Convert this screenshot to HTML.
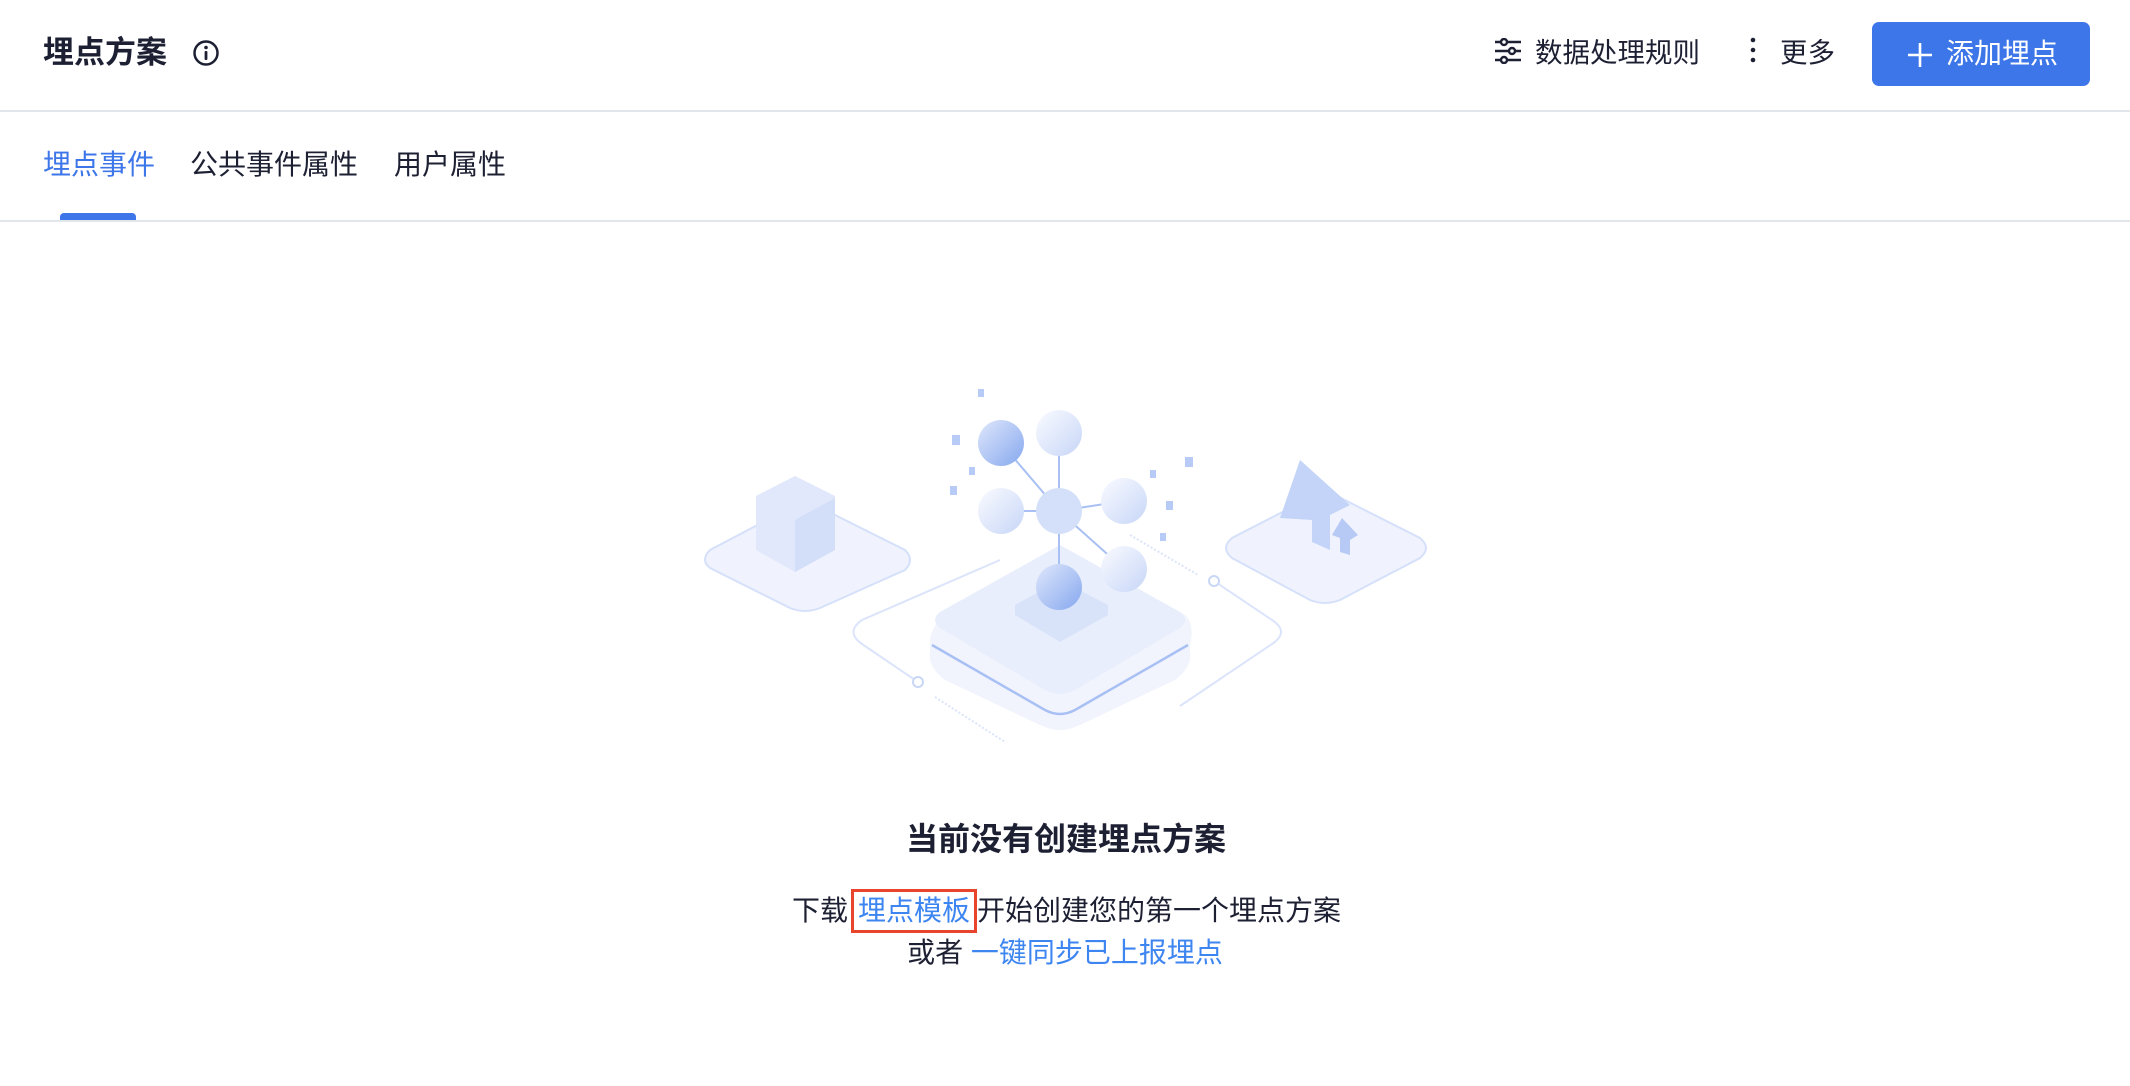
<!DOCTYPE html>
<html><head><meta charset="utf-8">
<style>
*{margin:0;padding:0;box-sizing:border-box}
html,body{width:2130px;height:1086px;background:#fff;overflow:hidden;font-family:"Liberation Sans","Noto Sans CJK SC",sans-serif;color:#1d2033}
.abs{position:absolute;white-space:nowrap}
.hline{position:absolute;left:0;width:2130px;height:2px;background:#e2e5ea}
</style></head><body>
<div class="abs" style="left:43px;top:33px;font-size:31px;font-weight:bold;line-height:40px">埋点方案</div>
<svg class="abs" style="left:192px;top:39px" width="28" height="28" viewBox="0 0 28 28"><circle cx="14" cy="14" r="11.5" fill="none" stroke="#1d2033" stroke-width="2.5"/><circle cx="14" cy="8.5" r="1.8" fill="#1d2033"/><rect x="12.6" y="12" width="2.8" height="9" rx="1" fill="#1d2033"/></svg>

<svg class="abs" style="left:1494px;top:38px" width="28" height="26" viewBox="0 0 28 26"><g stroke="#1d2033" stroke-width="2.4" fill="#fff"><line x1="1" y1="4" x2="27" y2="4"/><line x1="1" y1="13" x2="27" y2="13"/><line x1="1" y1="22" x2="27" y2="22"/><circle cx="10" cy="4" r="3"/><circle cx="18" cy="13" r="3"/><circle cx="10" cy="22" r="3"/></g></svg>
<div class="abs" style="left:1535px;top:34px;font-size:27.5px;line-height:38px">数据处理规则</div>
<svg class="abs" style="left:1748px;top:36px" width="10" height="30"><circle cx="5" cy="4" r="2.3" fill="#1d2033"/><circle cx="5" cy="14" r="2.3" fill="#1d2033"/><circle cx="5" cy="24" r="2.3" fill="#1d2033"/></svg>
<div class="abs" style="left:1780px;top:34px;font-size:27.5px;line-height:38px">更多</div>
<div class="abs" style="left:1872px;top:22px;width:218px;height:64px;background:#3d76e8;border-radius:7px"></div>
<svg class="abs" style="left:1907px;top:42px" width="26" height="26"><line x1="13" y1="1" x2="13" y2="25" stroke="#fff" stroke-width="2.6"/><line x1="1" y1="13" x2="25" y2="13" stroke="#fff" stroke-width="2.6"/></svg>
<div class="abs" style="left:1946px;top:35px;font-size:28px;line-height:38px;color:#fff">添加埋点</div>

<div class="hline" style="top:110px"></div>
<div class="abs" style="left:43px;top:146px;font-size:28px;line-height:38px;color:#3d76e8">埋点事件</div>
<div class="abs" style="left:190px;top:146px;font-size:28px;line-height:38px">公共事件属性</div>
<div class="abs" style="left:394px;top:146px;font-size:28px;line-height:38px">用户属性</div>
<div class="abs" style="left:60px;top:213px;width:76px;height:8px;background:#3d76e8;border-radius:4px 4px 0 0"></div>
<div class="hline" style="top:220px"></div>

<svg class="abs" style="left:0;top:0" width="2130" height="1086" viewBox="0 0 2130 1086">
<defs>
<linearGradient id="g1" x1="0" y1="0" x2="1" y2="1"><stop offset="0" stop-color="#dfe7fb"/><stop offset="1" stop-color="#86a8ef"/></linearGradient>
<linearGradient id="g2" x1="0" y1="0" x2="1" y2="1"><stop offset="0" stop-color="#fafbff"/><stop offset="1" stop-color="#c7d6f7"/></linearGradient>
</defs>
<path d="M1000 560 L862 620 Q845 632 862 644 L918 682" fill="none" stroke="#dbe4fa" stroke-width="2"/>
<path d="M1214 581 L1272 620 Q1290 632 1272 644 L1180 706" fill="none" stroke="#dbe4fa" stroke-width="2"/>
<circle cx="918" cy="682" r="5" fill="#fff" stroke="#c9d7f6" stroke-width="2"/>
<circle cx="1214" cy="581" r="5" fill="#fff" stroke="#c9d7f6" stroke-width="2"/>
<line x1="935" y1="697" x2="1005" y2="742" stroke="#dbe4fa" stroke-width="2" stroke-dasharray="2 2"/>
<line x1="1130" y1="535" x2="1198" y2="575" stroke="#dbe4fa" stroke-width="2" stroke-dasharray="2 2"/>
<path d="M805 500 L905 550 Q915 560 905 570 L820 608 Q805 614 790 608 L710 568 Q700 560 710 550 Z" fill="#f0f3fd" stroke="#d5e0fa" stroke-width="2"/>
<path d="M756 496 L795 476 L835 496 L835 550 L795 572 L756 550 Z" fill="#e1e8fb"/>
<path d="M795 520 L835 498 L835 550 L795 572 Z" fill="#d3def9"/>
<path d="M1325 490 L1420 538 Q1432 548 1420 558 L1340 600 Q1325 606 1310 600 L1232 558 Q1220 548 1232 538 Z" fill="#f0f3fd" stroke="#d5e0fa" stroke-width="2"/>
<path d="M1300 460 L1350 505 L1330 515 L1330 550 L1312 542 L1312 520 L1280 518 Z" fill="#c3d4f8"/>
<path d="M1342 518 L1358 535 L1350 540 L1350 555 L1340 552 L1340 538 L1332 535 Z" fill="#b7caf6"/>
<path d="M1060 545 L1185 615 Q1195 625 1190 645 L1190 660 Q1188 670 1175 680 L1080 725 Q1060 735 1040 725 L945 680 Q932 670 930 660 L930 640 Q932 625 945 615 Z" fill="#f1f4fd"/>
<path d="M932 645 L1045 710 Q1060 718 1075 710 L1188 645" fill="none" stroke="#a9c0f4" stroke-width="2.5"/>
<path d="M1060 545 L1180 612 Q1190 620 1180 628 L1075 690 Q1060 698 1045 690 L940 628 Q930 620 940 612 Z" fill="#e8eefc"/>
<path d="M1060 580 L1108 605 L1108 615 L1060 642 L1015 615 L1015 605 Z" fill="#d8e3fa"/>
<g stroke="#a9c0f4" stroke-width="2">
<line x1="1059" y1="511" x2="1001" y2="443"/><line x1="1059" y1="511" x2="1059" y2="433"/>
<line x1="1059" y1="511" x2="1001" y2="511"/><line x1="1059" y1="511" x2="1124" y2="501"/>
<line x1="1059" y1="511" x2="1124" y2="569"/><line x1="1059" y1="511" x2="1059" y2="587"/>
</g>
<circle cx="1001" cy="443" r="23" fill="url(#g1)"/>
<circle cx="1059" cy="433" r="23" fill="url(#g2)"/>
<circle cx="1001" cy="511" r="23" fill="url(#g2)"/>
<circle cx="1059" cy="511" r="23" fill="#d4e0f9"/>
<circle cx="1124" cy="501" r="23" fill="url(#g2)"/>
<circle cx="1124" cy="569" r="23" fill="url(#g2)"/>
<circle cx="1059" cy="587" r="23" fill="url(#g1)"/>
<g fill="#b8cbf6">
<rect x="978" y="389" width="6" height="8"/><rect x="952" y="435" width="8" height="10"/><rect x="969" y="467" width="6" height="8"/><rect x="950" y="486" width="7" height="9"/>
<rect x="1185" y="457" width="8" height="10"/><rect x="1150" y="470" width="6" height="8"/><rect x="1166" y="501" width="7" height="9"/><rect x="1160" y="533" width="6" height="8"/>
</g>
</svg>

<div class="abs" style="left:0;width:2130px;text-align:center;top:819px;font-size:32px;font-weight:bold;line-height:40px;padding-left:2px">当前没有创建埋点方案</div>
<div class="abs" style="left:792px;top:889px;font-size:28px;line-height:40px">下载<span style="display:inline-block;border:3px solid #e8452c;color:#3d85f0;padding:0 4px;line-height:38px;margin:0 0 0 3px">埋点模板</span>开始创建您的第一个埋点方案</div>
<div class="abs" style="left:0;width:2130px;text-align:center;top:933px;font-size:28px;line-height:40px">或者 <span style="color:#3d85f0">一键同步已上报埋点</span></div>
</body></html>
